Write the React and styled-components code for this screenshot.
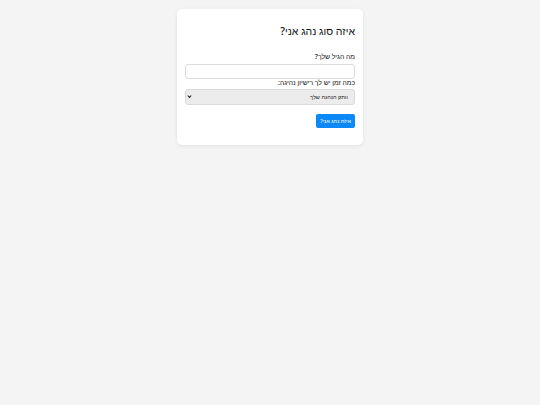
import React from "react";
import styled, { createGlobalStyle } from "styled-components";

const Global = createGlobalStyle`
  html, body { margin: 0; padding: 0; }
  body {
    background: #f4f4f4;
    font-family: "Noto Sans", "Liberation Sans", sans-serif;
    color: #222;
  }
`;

const Page = styled.div`
  padding-top: 9px;
  min-height: 396px;
`;

const Card = styled.form`
  direction: rtl;
  width: 186px;
  box-sizing: border-box;
  margin: 0 auto;
  background: #fff;
  border-radius: 5px;
  box-shadow: 0 1px 4px rgba(0, 0, 0, 0.08);
  padding: 8px 8px 17px 8px;
  display: flex;
  flex-direction: column;
`;

const Title = styled.h2`
  margin: 7px 0 14px 0;
  font-size: 10.5px;
  line-height: 14px;
  font-weight: 500;
  color: #111;
`;

const Label = styled.label`
  font-size: 6.8px;
  line-height: ${(p) => p.$lh || 9}px;
  font-weight: 500;
  color: #111;
  margin-bottom: ${(p) => p.$mb || 0}px;
`;

const Input = styled.input`
  display: block;
  box-sizing: border-box;
  height: 15px;
  width: 100%;
  border: 1px solid #dcdcdc;
  border-radius: 3px;
  background: #fff;
  padding: 0 4px;
  margin: 0;
  outline: none;
`;

const SelectWrap = styled.div`
  position: relative;
  margin-top: 2px;
  height: 16px;
`;

const Select = styled.select`
  display: block;
  appearance: none;
  -webkit-appearance: none;
  box-sizing: border-box;
  width: 100%;
  height: 16px;
  border: 1px solid #dadada;
  border-radius: 3px;
  background: #ececec;
  font-family: "Noto Sans", "Liberation Sans", sans-serif;
  font-size: 5.6px;
  line-height: 14px;
  color: #222;
  padding: 0 6px 0 14px;
  margin: 0;
  direction: rtl;
  outline: none;
`;

const Chevron = styled.svg`
  position: absolute;
  left: 2px;
  top: 5.5px;
  width: 5px;
  height: 5px;
  pointer-events: none;
`;

const Row = styled.div`
  display: flex;
  justify-content: flex-start;
  margin-top: 9px;
`;

const Button = styled.button`
  display: block;
  height: 14px;
  padding: 0 4px;
  border: none;
  border-radius: 2px;
  background: #0d88f7;
  color: #fff;
  font-family: "Noto Sans", "Liberation Sans", sans-serif;
  font-size: 5.6px;
  line-height: 14px;
  cursor: pointer;
`;

export default function App() {
  return (
    <Page>
      <Global />
      <Card onSubmit={(e) => e.preventDefault()}>
        <Title>איזה סוג נהג אני?</Title>
        <Label $mb={2.5}>מה הגיל שלך?</Label>
        <Input type="number" />
        <Label $lh={8}>כמה זמן יש לך רישיון נהיגה:</Label>
        <SelectWrap>
          <Select defaultValue="">
            <option value="">וותק הנהגה שלך</option>
          </Select>
          <Chevron viewBox="0 0 10 10">
            <path d="M1.5 3 L5 6.8 L8.5 3" fill="none" stroke="#222" strokeWidth="2.2" />
          </Chevron>
        </SelectWrap>
        <Row>
          <Button type="submit">איזה נהג אני?</Button>
        </Row>
      </Card>
    </Page>
  );
}
